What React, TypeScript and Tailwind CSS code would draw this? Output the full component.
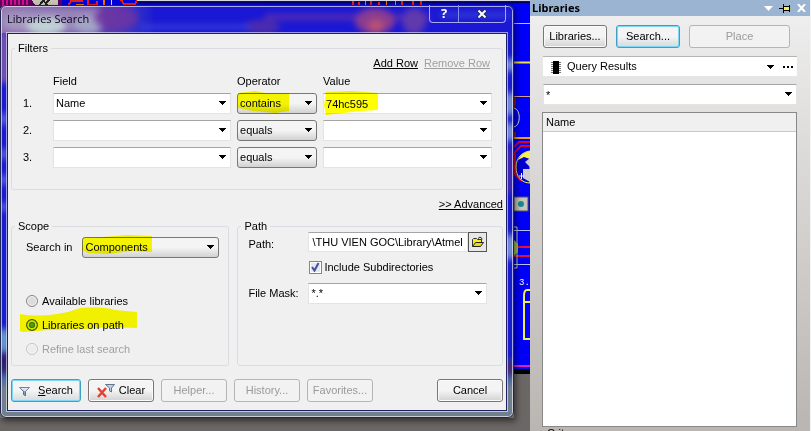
import type { ReactNode, ButtonHTMLAttributes } from "react";

const ring = "rounded-[3px] border border-[#777] bg-linear-to-b from-[#f4f4f4] from-50% to-[#d2d2d2]";

function Arrow({ className = "right-[5px]" }: { className?: string }) {
  return (
    <svg className={"pointer-events-none absolute top-2 " + className} width="7" height="5" viewBox="0 0 7 5" shapeRendering="crispEdges">
      <path d="M0 0h7v1H6v1H5v1H4v1H3V3H2V2H1V1H0z" fill="#000" />
    </svg>
  );
}

function Marker({ d, className }: { d: string; className: string }) {
  return (
    <svg className={"pointer-events-none absolute overflow-visible mix-blend-multiply " + className} width="120" height="26">
      <path d={d} fill="#ffff00" />
    </svg>
  );
}

function Drop({ label, value, raised, mark, className = "" }: { label: string; value: string; raised?: boolean; mark?: ReactNode; className?: string }) {
  return (
    <div className={"relative " + className}>
      <select
        aria-label={label}
        defaultValue={value}
        className={"block h-[21px] w-full appearance-none pr-4 pl-[2px] outline-none " + (raised ? ring : "border border-[#e4e4e4] border-t-[#a5a5a5] bg-white")}
      >
        <option>{value}</option>
      </select>
      {mark}
      <Arrow />
    </div>
  );
}

function Combo({ label, value, mark, className = "" }: { label: string; value: string; mark?: ReactNode; className?: string }) {
  return (
    <div className={"relative " + className}>
      <input aria-label={label} defaultValue={value} className="block h-[21px] w-full border border-[#e4e4e4] border-t-[#a5a5a5] bg-white pr-4 pl-[2px] outline-none" />
      {mark}
      <Arrow />
    </div>
  );
}

function Push({ focus, className = "", children, ...rest }: { focus?: boolean } & ButtonHTMLAttributes<HTMLButtonElement>) {
  const look = rest.disabled
    ? "border-[#b5b5b5] bg-[#f2f2f2] text-[#9a9a9a]"
    : focus
      ? "border-[#3c9fc8] bg-linear-to-b from-[#f4f4f4] from-50% to-[#d4dadd] shadow-[inset_0_0_0_1px_#7fd6f5]"
      : "border-[#777] bg-linear-to-b from-[#f4f4f4] from-50% to-[#d2d2d2] shadow-[inset_0_0_0_1px_#fafafa]";
  return (
    <button type="button" {...rest} className={"flex h-[23px] items-center justify-center rounded-[3px] border " + look + " " + className}>
      {children}
    </button>
  );
}

function Group({ title, className = "", children }: { title: string; className?: string; children: ReactNode }) {
  return (
    <fieldset className="min-w-0 rounded-[3px] border border-[#d9dde2]">
      <legend className="ml-[3px] px-[3px] leading-4">{title}</legend>
      <div className={className}>{children}</div>
    </fieldset>
  );
}

function Funnel() {
  return (
    <svg width="11" height="10" viewBox="0 0 11 10">
      <path d="M.5 1.500h10L6.500 5.500v4l-2-1v-3z" fill="#dce6f2" stroke="#7486a2" />
      <path d="M6.500 5.500v4l-2-1v-3l-2-2" fill="#90a2bc" stroke="#5a6c88" />
    </svg>
  );
}

/* The circuit board that shows around the dialog */
function Board() {
  return (
    <>
      <div className="absolute inset-0 bg-[#6b6765]" />
      <svg className="absolute top-0 left-0" width="530" height="8" shapeRendering="crispEdges">
        <rect width="530" height="8" fill="#0000d8" />
        <rect width="62" height="8" fill="#600060" />
        {[2, 6, 10, 14, 18, 22, 26].map((x) => (
          <rect key={x} x={x} width="2" height="8" fill="#d0108c" />
        ))}
        <path d="M32 0h26v5H35z" fill="#c9c4b8" />
        <path d="M40 5l3-5 4 5M49 0l-3 3" stroke="#222" strokeWidth="2" fill="none" />
        <path d="M68 6l3-5h12M88 0v5h9V1M121 0l3 4h11l2-4" stroke="#e02020" strokeWidth="2" fill="none" />
        <path d="M76 5h8M104 0v5" stroke="#f07000" strokeWidth="2" />
        <path d="M111 0v5" stroke="#ddd" />
        <rect x="137" width="393" height="1" fill="#d5d5e5" />
        <path d="M137 2h393" stroke="#000060" />
        <path d="M353 1v5M359 2v3M371 1v5M379 2v3M402 1v5M413 1v5M421 1v5" stroke="#e02020" strokeWidth="2" />
        <path d="M365 1v5M386 1v5M395 1v4" stroke="#f08000" />
      </svg>
      <svg className="absolute top-0 right-0" width="17" height="374" viewBox="0 0 17 374">
        <rect y="4" width="17" height="370" fill="#0000fa" />
        <rect y="369" width="17" height="5" fill="#000" />
        <path d="M0 366h17" stroke="#e020c0" strokeWidth="2" />
        <path d="M0 23.500h17M0 230.500h17M0 264.500h17" stroke="#b8c0ff" />
        <path d="M0 62.500h17" stroke="#f0e040" strokeWidth="2" />
        <path d="M0 96.500h17" stroke="#d8a090" />
        <path d="M2 98v6l-1 3M2 132v5" stroke="#802020" strokeWidth="2" fill="none" />
        <path d="M1 108c7 1 7 18 0 19" stroke="#e4e8a0" fill="none" />
        <path d="M0 138h17" stroke="#f0a020" strokeWidth="2" />
        <path d="M17 146H8l-6 6v22l5 6h10M17 142H6l-5 5" stroke="#e00030" strokeWidth="2" fill="none" />
        <path d="M17 151c-8 1-14 7-14 16 0 10 6 16 14 16z" fill="#0000d0" stroke="#f4f060" />
        <path d="M17 151c-6 1-10 4-12 9l6-3 6 2z" fill="#f6f050" />
        <path d="M12 162l5-4v9zM10 169h7v13l-7-4z" fill="#cfcbd0" />
        <path d="M6 176h5M8.500 173v6" stroke="#fff" />
        <rect x="1" y="197" width="14" height="14" fill="#c9c4bc" stroke="#555" />
        <circle cx="8" cy="204" r="3" fill="#109090" />
        <path d="M0 247h17M0 256h17" stroke="#e01040" strokeWidth="2" />
        <path d="M0 227h4v41H0" fill="none" stroke="#d8d890" />
        <path d="M1 240l4 4v8l-4 4z" fill="#a0c050" />
        <path d="M17 290h-3q-3 0-3 6v43h6M12 302h5" fill="none" stroke="#f0f050" strokeWidth="2" />
        <text x="6" y="285" fill="#fff" fontSize="9" fontFamily="Liberation Mono">3.</text>
      </svg>
    </>
  );
}

/* Blurred desktop seen through the glass frame */
function Glass() {
  return (
    <div className="absolute inset-0 overflow-hidden rounded-[6px] bg-linear-to-b from-[#1a1cd0] from-85% to-[#70808e] to-93%">
      <div className="absolute inset-x-0 top-0 h-7 bg-linear-to-r from-[#9570ac] via-[#5840b0] via-20% to-[#1a18d4] to-30%" />
      <svg className="absolute top-0 left-0 blur-[3px]" width="514" height="30">
        <path d="M0 3h100v24H0z" fill="#9884b8" />
        <ellipse cx="20" cy="17" rx="16" ry="8" fill="#a899c0" />
        <ellipse cx="46" cy="21" rx="20" ry="9" fill="#c0d0d4" />
        <ellipse cx="88" cy="20" rx="15" ry="9" fill="#a4a4c6" />
        <ellipse cx="116" cy="13" rx="22" ry="12" fill="#7135a0" opacity=".8" />
        <ellipse cx="262" cy="22" rx="18" ry="7" fill="#4c2cad" />
        <path d="M265 12h165" stroke="#6030b0" strokeWidth="5" />
        <ellipse cx="375" cy="16" rx="20" ry="13" fill="#8b3c91" />
        <ellipse cx="376" cy="21" rx="8" ry="7" fill="#b85076" />
        <ellipse cx="414" cy="16" rx="12" ry="13" fill="#603aad" />
        <path d="M140 22h110M440 10h70" stroke="#3c46d9" strokeWidth="4" />
      </svg>
      <svg className="absolute top-7 left-0 blur-[3px]" width="8" height="380">
        <rect width="8" height="50" fill="#8a5faa" />
        <path d="M4 80v12M4 116v10M4 142v10M4 170v8" stroke="#7688e4" strokeWidth="5" />
        <ellipse cx="4" cy="308" rx="5" ry="13" fill="#78b8ca" />
        <rect y="320" width="8" height="20" fill="#351858" />
      </svg>
      <svg className="absolute top-7 right-0 blur-[3px]" width="8" height="380">
        <path d="M4 26v12M4 60v22M4 90v18M4 202v24" stroke="#9cbad8" strokeWidth="7" />
        <path d="M4 115v45" stroke="#5730a8" strokeWidth="6" />
        <rect y="328" width="8" height="14" fill="#502060" />
      </svg>
      <div className="absolute inset-0 rounded-[6px] border border-[#20264c] shadow-[inset_0_0_0_1px_#ffffffa0]" />
    </div>
  );
}

function Choice({ label, id, ...rest }: { label: string; id: string; disabled?: boolean; defaultChecked?: boolean }) {
  return (
    <div className={"flex h-6 items-center gap-1 " + (rest.disabled ? "text-[#a0a0a0]" : "")}>
      <input
        type="radio"
        name="scope"
        id={id}
        {...rest}
        className="size-3 appearance-none rounded-full border border-[#858585] bg-[#dcdcdc] shadow-[inset_0_0_0_1px_#f8f8f8] checked:border-[#425842] checked:bg-radial checked:from-[#4ea348] checked:from-20% checked:to-[#143c14] checked:to-55% checked:shadow-[inset_0_0_0_2px_#d0dfc8] disabled:border-[#c5c5c5] disabled:bg-[#ededed]"
      />
      <label htmlFor={id}>{label}</label>
    </div>
  );
}

function SearchDialog() {
  const cols = "grid grid-cols-[24px_177fr_80px_168fr] items-center gap-x-[6px]";
  return (
    <section aria-label="Libraries Search" className="relative mt-[5px] px-[7px] pb-[7px] shadow-[2px_3px_6px_#0008]">
      <Glass />
      <header className="relative flex h-7 items-start justify-between">
        <h1 className="pt-[5px] font-['Open_Sans',sans-serif] text-[11px] leading-[18px] text-[#080818]">Libraries Search</h1>
        <div className="mr-px flex h-[18px] rounded-b-[4px] border border-t-0 border-[#a8a8f0] font-['Open_Sans',sans-serif] text-[13px] leading-none font-bold text-white">
          <button type="button" aria-label="Help" className="w-[29px] border-r border-[#8888e8]">?</button>
          <button type="button" aria-label="Close" className="flex w-[46px] items-center justify-center">
            <svg width="10" height="8" viewBox="0 0 10 8"><path d="M1 0l8 8M9 0L1 8" stroke="#222a60" strokeWidth="4" /><path d="M1.500.5l7 7M8.500.5l-7 7" stroke="#fff" strokeWidth="2" /></svg>
          </button>
        </div>
      </header>
      <div className="relative border border-[#202060] bg-[#f0f0f0] px-[3px] pt-[6px] pb-2 shadow-[0_0_0_1px_#ffffff90]">
        <Group title="Filters" className="h-[133px] pr-[10px] pl-[11px]">
          <div className="flex justify-end gap-[6px] pr-[2px] leading-[15px]">
            <a href="#add" className="underline">Add Row</a>
            <a href="#remove" className="text-[#a0a0a0] underline">Remove Row</a>
          </div>
          <div className={cols + " mb-[2px] h-5 leading-5"}>
            <span className="col-start-2">Field</span>
            <span>Operator</span>
            <span>Value</span>
          </div>
          <div className="grid gap-[6px]">
            <div className={cols}>
              <span>1.</span>
              <Drop label="Field 1" value="Name" />
              <Drop label="Operator 1" value="contains" raised mark={<Marker className="top-0 left-0" d="M1 0L18-2l10 2 24 0V18l-14 2-22-2L1 15z" />} />
              <Combo label="Value 1" value="74hc595" mark={<Marker className="top-0 left-0" d="M3-1l26-1 26 2v17l-18 1-16 2-18 2L1 12z" />} />
            </div>
            {["2.", "3."].map((n) => (
              <div className={cols} key={n}>
                <span>{n}</span>
                <Drop label={"Field " + n} value="" />
                <Drop label={"Operator " + n} value="equals" raised />
                <Combo label={"Value " + n} value="" />
              </div>
            ))}
          </div>
        </Group>
        <div className="flex h-7 items-center justify-end"><a href="#advanced" className="underline">&gt;&gt; Advanced</a></div>
        <div className="grid grid-cols-[218fr_265fr] gap-2">
          <Group title="Scope" className="h-[131px] pr-[9px] pl-[14px]">
            <div className="flex items-center gap-[10px] pt-[3px]">
              <span className="shrink-0">Search in</span>
              <Drop label="Search in" value="Components" raised className="flex-1" mark={<Marker className="top-0 left-0" d="M1 1l20-1 24-2 25 1v16l-20-1-24 3-20-1-6-3z" />} />
            </div>
            <div className="relative mt-[31px]">
              <Choice id="available" label="Available libraries" />
              <Choice id="onpath" label="Libraries on path" defaultChecked />
              <Choice id="refine" label="Refine last search" disabled />
              <Marker className="top-[25px] -left-[6px]" d="M0 0q20 4 48-2l12-4q22-2 35 2l22 2v16l-28-1-20 2-40 1-26 2L0 17z" />
            </div>
          </Group>
          <Group title="Path" className="h-[131px] pr-[15px] pl-[10px]">
            <div className="-mt-[2px] grid grid-cols-[54px_1fr] items-center gap-x-[6px]">
              <label htmlFor="path" className="pt-1">Path:</label>
              <div className="flex h-5">
                <input id="path" defaultValue="\THU VIEN GOC\Library\Atmel" className="h-5 min-w-0 flex-1 border border-[#e4e4e4] border-t-[#a5a5a5] bg-white pl-[3px] outline-none" />
                <button type="button" aria-label="Browse" className="flex w-[19px] items-center justify-center border border-[#555] bg-[#e8e8e8]">
                  <svg width="13" height="12" viewBox="0 0 13 12">
                    <path d="M1.500 10.500v-7l1-1h3l1 1h4v3" fill="#f8ec20" stroke="#333" />
                    <path d="M1.500 10.500l3-4h8l-3 4z" fill="#e8dc10" stroke="#222" />
                    <path d="M7 2.500q2-3 4 0v1" fill="none" stroke="#222" />
                  </svg>
                </button>
              </div>
              <div className="col-start-2 flex h-[30px] items-center gap-[3px] pl-px">
                <input id="sub" type="checkbox" defaultChecked className="peer size-[13px] shrink-0 appearance-none border border-[#858585] bg-[#e4e8ee] shadow-[inset_0_0_0_1px_#fff]" />
                <svg className="pointer-events-none -ml-[15px] hidden peer-checked:block" width="11" height="11" viewBox="0 0 11 11"><path d="M2 5l2.500 3.500L8.500 1" stroke="#4450a0" strokeWidth="2" fill="none" /></svg>
                <label htmlFor="sub" className="whitespace-nowrap">Include Subdirectories</label>
              </div>
              <span className="whitespace-nowrap">File Mask:</span>
              <Combo label="File Mask" value="*.*" />
            </div>
          </Group>
        </div>
        <footer className="mt-[13px] flex gap-[7px]">
          <Push focus className="w-[70px] gap-2"><Funnel /><span><u>S</u>earch</span></Push>
          <Push className="w-[66px] gap-1">
            <svg width="18" height="15" viewBox="0 0 18 15">
              <path d="M8.500 1.500h9L14.500 5v4l-2-1V5l-4-3.500" fill="#c3cfe0" stroke="#62748f" />
              <path d="M1 5l8 9M9 5l-8 9" stroke="#e34234" strokeWidth="2.500" />
            </svg>
            Clear
          </Push>
          <Push disabled className="w-[66px]">Helper...</Push>
          <Push disabled className="w-[66px]">History...</Push>
          <Push disabled className="w-[66px]">Favorites...</Push>
          <Push className="ml-auto w-[66px]">Cancel</Push>
        </footer>
      </div>
    </section>
  );
}

function LibrariesPanel() {
  return (
    <aside className="flex w-[281px] shrink-0 flex-col overflow-hidden border-r border-[#f4f4f4] bg-linear-to-b from-[#f0f0f0] to-[#bab5b1]">
      <header className="flex h-4 shrink-0 items-center bg-[#9ab4d2] pr-1 pl-[2px]">
        <h2 className="flex-1 font-['Noto_Sans',sans-serif] text-[11px] leading-4 font-bold">Libraries</h2>
        <div className="flex items-center gap-[6px]">
          <button type="button" aria-label="Menu"><svg className="block" width="9" height="5"><path d="M0 0h9L4.500 5z" fill="#fff" /></svg></button>
          <button type="button" aria-label="Pin">
            <svg className="block" width="12" height="9" shapeRendering="crispEdges">
              <path d="M0 4h4v1H0zM4 0h1v9H4zM5 2h5v5H5zM10 1h1v7h-1z" fill="#000" />
              <path d="M5 3h5v3H5z" fill="#f4ec60" />
            </svg>
          </button>
          <button type="button" aria-label="Close panel"><svg className="block" width="9" height="8"><path d="M1 0l7 8M8 0L1 8" stroke="#fff" strokeWidth="2" /></svg></button>
        </div>
      </header>
      <div className="flex gap-[9px] pt-[9px] pr-5 pl-[13px]">
        <Push className="w-16">Libraries...</Push>
        <Push focus className="w-16">Search...</Push>
        <Push disabled className="flex-1">Place</Push>
      </div>
      <div className="mx-[13px] mt-2 flex h-5 items-center border-t border-[#b5b5b5] bg-white pr-1 pl-[7px]">
        <svg width="12" height="14" viewBox="0 0 12 14" shapeRendering="crispEdges">
          <path d="M1 2.500h10M1 4.500h10M1 6.500h10M1 8.500h10M1 10.500h10M1 12.500h10" stroke="#777" />
          <rect x="3" y="1" width="6" height="13" fill="#000" />
        </svg>
        <div className="relative ml-px flex-1">
          <select aria-label="Library" className="block h-[19px] w-full appearance-none pl-1 outline-none"><option>Query Results</option></select>
          <Arrow className="right-[9px]" />
        </div>
        <button type="button" aria-label="More"><svg className="block" width="10" height="2"><path d="M0 1h2M4 1h2M8 1h2" stroke="#000" strokeWidth="2" /></svg></button>
      </div>
      <Combo label="Filter" value="*" className="mx-[13px] mt-2" />
      <div className="mt-[7px] mr-[13px] ml-3 min-h-[315px] border border-[#888] bg-white">
        <table className="w-full">
          <thead><tr><th className="h-[18px] border-b border-[#c8c8c8] bg-[#f0f0f0] pl-[3px] text-left leading-4 font-normal">Name</th></tr></thead>
        </table>
      </div>
      <div className="ml-[17px] leading-3">Crit</div>
    </aside>
  );
}

export default function App() {
  return (
    <main className="flex h-screen overflow-hidden font-['Liberation_Sans',Arial,sans-serif] text-[11px] text-black">
      <div className="relative min-w-0 flex-1 overflow-hidden pr-4">
        <Board />
        <SearchDialog />
      </div>
      <LibrariesPanel />
    </main>
  );
}
